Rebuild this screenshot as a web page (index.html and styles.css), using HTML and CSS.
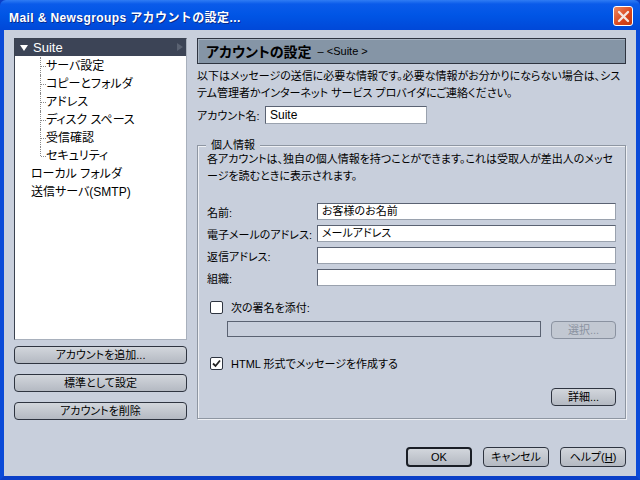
FILE: index.html
```html
<!DOCTYPE html>
<html lang="ja">
<head>
    <meta charset="UTF-8">
    <title>Mail &amp; Newsgroups アカウントの設定...</title>
    <link rel="stylesheet" href="styles.css">
</head>
<body>
    <div class="window">
        <div class="titlebar">
            <div class="title">Mail &amp; Newsgroups アカウントの設定...</div>
            <div class="close-btn">
                <svg width="13" height="13" viewBox="0 0 13 13">
                    <path d="M2 2 L11 11 M11 2 L2 11" stroke="#f4e6e0" stroke-width="2.4" stroke-linecap="round"/>
                </svg>
            </div>
        </div>

        <div class="client">
            <div class="main">
                <div class="sidebar">
                    <div class="tree">
                        <div class="tree-row selected">
                            <span class="twisty"></span>Suite
                            <span class="row-arrow"></span>
                        </div>
                        <div class="children">
                            <div class="tree-row child">サーバ設定</div>
                            <div class="tree-row child">コピーとフォルダ</div>
                            <div class="tree-row child">アドレス</div>
                            <div class="tree-row child">ディスク スペース</div>
                            <div class="tree-row child">受信確認</div>
                            <div class="tree-row child last">セキュリティ</div>
                        </div>
                        <div class="tree-row top">ローカル フォルダ</div>
                        <div class="tree-row top">送信サーバ(SMTP)</div>
                    </div>
                    <button class="btn side-btn">アカウントを追加...</button>
                    <button class="btn side-btn">標準として設定</button>
                    <button class="btn side-btn">アカウントを削除</button>
                </div>

                <div class="panel">
                    <div class="panel-header">
                        <span class="header-title">アカウントの設定</span>
                        <span class="header-sub">– &lt;Suite &gt;</span>
                    </div>
                    <p class="desc">以下はメッセージの送信に必要な情報です。必要な情報がお分かりにならない場合は、システム管理者かインターネット サービス プロバイダにご連絡ください。</p>
                    <div class="account-row">
                        <label>アカウント名:</label>
                        <div class="textbox account-box">Suite</div>
                    </div>

                    <div class="groupbox">
                        <div class="legend">個人情報</div>
                        <p class="group-desc">各アカウントは、独自の個人情報を持つことができます。これは受取人が差出人のメッセージを読むときに表示されます。</p>
                        <div class="fields">
                            <label>名前:</label>
                            <div class="textbox">お客様のお名前</div>
                            <label>電子メールのアドレス:</label>
                            <div class="textbox">メールアドレス</div>
                            <label>返信アドレス:</label>
                            <div class="textbox"></div>
                            <label>組織:</label>
                            <div class="textbox"></div>
                        </div>

                        <div class="check-row sig-row">
                            <span class="checkbox"></span>次の署名を添付:
                        </div>
                        <div class="sig-file">
                            <div class="textbox disabled"></div>
                            <button class="btn small-btn" disabled>選択...</button>
                        </div>
                        <div class="check-row html-row">
                            <span class="checkbox">
                                <svg width="9" height="9" viewBox="0 0 9 9">
                                    <path d="M1 4.5 L3.5 7 L8 1.5" fill="none" stroke="#222" stroke-width="1.8"/>
                                </svg>
                            </span>HTML 形式でメッセージを作成する
                        </div>
                        <div class="advanced">
                            <button class="btn small-btn">詳細...</button>
                        </div>
                    </div>
                </div>
            </div>

            <div class="footer">
                <button class="btn footer-btn default">OK</button>
                <button class="btn footer-btn">キャンセル</button>
                <button class="btn footer-btn">ヘルプ(<u>H</u>)</button>
            </div>
        </div>
    </div>
</body>
</html>
```

FILE: styles.css
```css
body {
    margin: 0;
    padding: 0;
    font-family: 'Liberation Sans', 'Noto Sans CJK JP', sans-serif;
    font-size: 11px;
    font-feature-settings: "palt";
    color: #000;
    background-color: #0a3fc8;
}
.window {
    width: 640px;
    height: 480px;
    display: flex;
    flex-direction: column;
    box-sizing: border-box;
    overflow: hidden;
}
.titlebar {
    height: 30px;
    flex-shrink: 0;
    display: flex;
    align-items: center;
    justify-content: space-between;
    padding: 0 7px 0 9px;
    background: linear-gradient(#2f7cf4 0px, #0a5bea 4px, #0055e5 50%, #0048d8 100%);
    border-radius: 6px 6px 0 0;
    box-sizing: border-box;
}
.title {
    color: #fff;
    font-weight: bold;
    font-size: 12px;
    font-feature-settings: normal;
    letter-spacing: 0.4px;
    text-shadow: 1px 1px 0 #0a2a8a;
    padding-top: 2px;
}
.close-btn {
    width: 20px;
    height: 20px;
    box-sizing: border-box;
    border: 1px solid #fff;
    border-radius: 3px;
    background: linear-gradient(135deg, #f08a60, #d8441c 60%, #c23a12);
    display: flex;
    align-items: center;
    justify-content: center;
    margin-top: 2px;
}
.client {
    flex: 1;
    display: flex;
    flex-direction: column;
    background-color: #c8cfdc;
    border-left: 4px solid #0a4ad8;
    border-right: 4px solid #0a4ad8;
    border-bottom: 4px solid #0a3fc8;
    padding: 8px 10px 0 10px;
    box-sizing: border-box;
}
.main {
    display: flex;
    gap: 10px;
    height: 382px;
}
.sidebar {
    width: 173px;
    display: flex;
    flex-direction: column;
}
.tree {
    height: 302px;
    box-sizing: border-box;
    background-color: #fff;
    border: 1px solid #3a4250;
    border-right-color: #a8b0bc;
    border-bottom-color: #a8b0bc;
    margin-bottom: 6px;
    font-size: 12px;
}
.tree-row {
    height: 18px;
    line-height: 18px;
    white-space: nowrap;
    position: relative;
}
.tree-row.selected {
    height: 17px;
    line-height: 17px;
    background-color: #3c4456;
    color: #fff;
    padding-left: 4px;
    font-size: 13px;
}
.twisty {
    display: inline-block;
    width: 0;
    height: 0;
    border-left: 4px solid transparent;
    border-right: 4px solid transparent;
    border-top: 6px solid #fff;
    margin: 0 5px 1px 1px;
    vertical-align: middle;
}
.row-arrow {
    position: absolute;
    right: 3px;
    top: 4px;
    width: 0;
    height: 0;
    border-top: 4px solid transparent;
    border-bottom: 4px solid transparent;
    border-left: 6px solid #5a6272;
}
.children {
    padding-top: 1px;
    margin-left: 25px;
}
.tree-row.child {
    padding-left: 6px;
}
.tree-row.child::before {
    content: "";
    position: absolute;
    left: 0;
    top: 0;
    bottom: 0;
    border-left: 1px dotted #888;
}
.tree-row.child::after {
    content: "";
    position: absolute;
    left: 1px;
    top: 9px;
    width: 5px;
    border-top: 1px dotted #888;
}
.tree-row.child.last::before {
    bottom: 9px;
}
.tree-row.top {
    padding-left: 16px;
}
.btn {
    font-family: inherit;
    font-size: 11px;
    font-feature-settings: "palt";
    color: #000;
    border: 1px solid #2e3440;
    border-radius: 4px;
    background: linear-gradient(#d2d6dc, #b4b9c2);
    padding: 0;
    box-sizing: border-box;
    line-height: 16px;
    white-space: nowrap;
}
.side-btn {
    height: 18px;
    margin-top: 10px;
    width: 100%;
}
.sidebar .side-btn:first-of-type {
    margin-top: 0;
}
.panel {
    flex: 1;
    display: flex;
    flex-direction: column;
}
.panel-header {
    height: 26px;
    box-sizing: border-box;
    background-color: #8595a6;
    border: 1px solid #2e3440;
    box-shadow: inset 1px 1px 0 #a8b4c2;
    display: flex;
    align-items: center;
    padding-left: 8px;
}
.header-title {
    font-weight: bold;
    font-size: 14px;
}
.header-sub {
    font-size: 11px;
    margin-left: 6px;
}
.desc {
    margin: 4px 0 0 0;
    line-height: 17px;
}
.account-row {
    display: flex;
    align-items: center;
    margin-top: 4px;
}
.account-row label {
    width: 68px;
    white-space: nowrap;
}
.textbox {
    height: 17px;
    box-sizing: border-box;
    background-color: #fff;
    border: 1px solid #5a6272;
    border-right-color: #9aa2ae;
    border-bottom-color: #9aa2ae;
    padding-left: 4px;
    line-height: 15px;
    white-space: nowrap;
}
.account-box {
    width: 162px;
    height: 18px;
    line-height: 16px;
    font-size: 12px;
}
.groupbox {
    position: relative;
    margin-top: 21px;
    height: 274px;
    box-sizing: border-box;
    border: 1px solid #8e96a2;
    box-shadow: 1px 1px 0 #eef0f4 inset, 1px 1px 0 #eef0f4;
    padding: 5px 9px 0 9px;
}
.legend {
    position: absolute;
    top: -9px;
    left: 8px;
    padding: 0 5px;
    background-color: #c8cfdc;
    line-height: 17px;
}
.group-desc {
    margin: 0;
    line-height: 17px;
}
.fields {
    display: grid;
    grid-template-columns: 110px 1fr;
    row-gap: 5px;
    align-items: center;
    margin-top: 18px;
}
.fields label {
    white-space: nowrap;
}
.check-row {
    display: flex;
    align-items: center;
    margin-left: 3px;
}
.sig-row {
    margin-top: 13px;
}
.checkbox {
    width: 11px;
    height: 11px;
    border: 1px solid #2e3440;
    border-radius: 2px;
    background-color: #fff;
    margin-right: 8px;
    display: flex;
    align-items: center;
    justify-content: center;
}
.sig-file {
    display: flex;
    gap: 10px;
    margin: 6px 0 0 20px;
}
.sig-file .textbox {
    flex: 1;
    background-color: #c8cfdc;
    border-color: #5a6272;
    height: 16px;
}
.small-btn {
    width: 65px;
    height: 18px;
}
.small-btn:disabled {
    color: #8a92a0;
    border-color: #8a92a0;
    background: #c2c8d2;
}
.html-row {
    margin-top: 16px;
}
.advanced {
    display: flex;
    justify-content: flex-end;
    margin-top: 17px;
}
.footer {
    display: flex;
    justify-content: flex-end;
    gap: 11px;
    margin-top: 27px;
}
.footer-btn {
    width: 66px;
    height: 20px;
}
.footer-btn.default {
    border-width: 2px;
    border-color: #1a1e26;
}
```
